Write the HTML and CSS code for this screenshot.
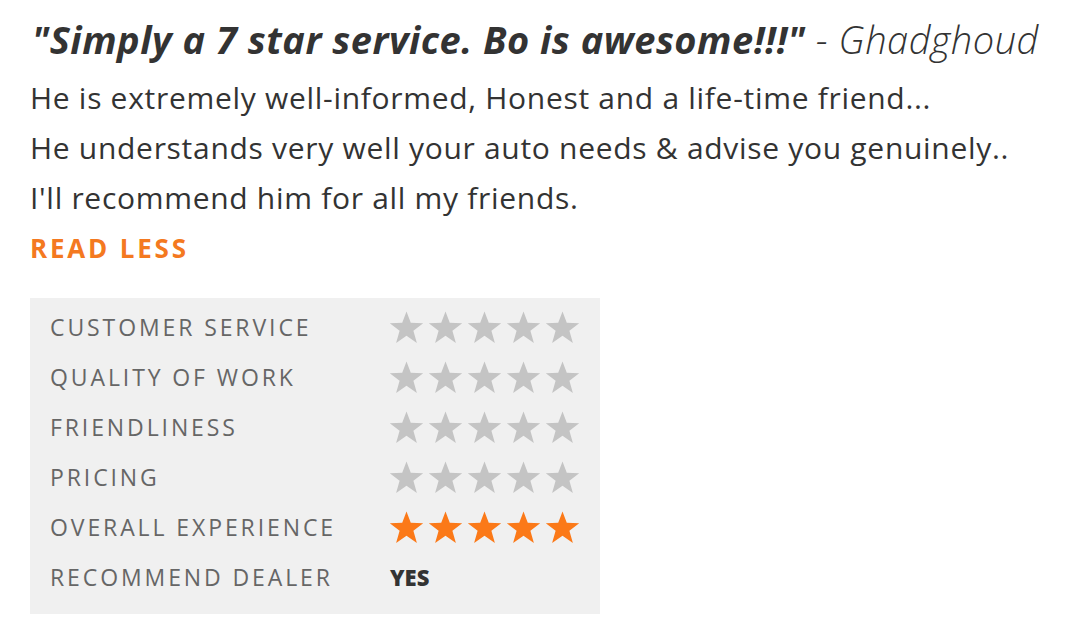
FILE: index.html
```html
<!DOCTYPE html>
<html lang="en">
<head>
    <meta charset="UTF-8">
    <title>Review</title>
    <link rel="stylesheet" href="styles.css">
</head>
<body>
    <div class="review">
        <h2 class="review-title"><strong>"Simply a 7 star service. Bo is awesome!!!"</strong> <span class="author">- Ghadghoud</span></h2>
        <p class="review-text">He is extremely well-informed, Honest and a life-time friend...<br>
        He understands very well your auto needs &amp; advise you genuinely..<br>
        I'll recommend him for all my friends.</p>
        <a href="#" class="read-less">READ LESS</a>

        <div class="ratings">
            <div class="rating-row">
                <span class="label">Customer Service</span>
                <span class="stars"><svg class="star"><use href="#star"/></svg><svg class="star"><use href="#star"/></svg><svg class="star"><use href="#star"/></svg><svg class="star"><use href="#star"/></svg><svg class="star"><use href="#star"/></svg></span>
            </div>
            <div class="rating-row">
                <span class="label">Quality of Work</span>
                <span class="stars"><svg class="star"><use href="#star"/></svg><svg class="star"><use href="#star"/></svg><svg class="star"><use href="#star"/></svg><svg class="star"><use href="#star"/></svg><svg class="star"><use href="#star"/></svg></span>
            </div>
            <div class="rating-row">
                <span class="label">Friendliness</span>
                <span class="stars"><svg class="star"><use href="#star"/></svg><svg class="star"><use href="#star"/></svg><svg class="star"><use href="#star"/></svg><svg class="star"><use href="#star"/></svg><svg class="star"><use href="#star"/></svg></span>
            </div>
            <div class="rating-row">
                <span class="label">Pricing</span>
                <span class="stars"><svg class="star"><use href="#star"/></svg><svg class="star"><use href="#star"/></svg><svg class="star"><use href="#star"/></svg><svg class="star"><use href="#star"/></svg><svg class="star"><use href="#star"/></svg></span>
            </div>
            <div class="rating-row">
                <span class="label">Overall Experience</span>
                <span class="stars filled"><svg class="star"><use href="#star"/></svg><svg class="star"><use href="#star"/></svg><svg class="star"><use href="#star"/></svg><svg class="star"><use href="#star"/></svg><svg class="star"><use href="#star"/></svg></span>
            </div>
            <div class="rating-row">
                <span class="label">Recommend Dealer</span>
                <span class="answer">YES</span>
            </div>
        </div>
    </div>

    <svg width="0" height="0" style="position:absolute">
        <symbol id="star" viewBox="0 0 36 34">
            <polygon points="18,0.5 22.4,12.2 35.2,12.6 25.1,20.4 28.7,33 18,25.6 7.3,33 10.9,20.4 0.8,12.6 13.6,12.2"/>
        </symbol>
    </svg>
</body>
</html>
```

FILE: styles.css
```css
body {
    margin: 0;
    padding: 0;
    background-color: #fff;
    font-family: "Open Sans", "Noto Sans", sans-serif;
    color: #333;
}
.review {
    padding: 14px 0 0 30px;
}
.review-title {
    margin: 0 0 0 2px;
    font-size: 38px;
    font-style: italic;
    font-weight: normal;
    line-height: 50px;
    letter-spacing: 0.5px;
    color: #333;
    white-space: nowrap;
}
.review-title strong {
    font-weight: 700;
}
.review-title .author {
    font-weight: 300;
}
.review-text {
    margin: 9px 0 0;
    font-size: 30px;
    line-height: 50px;
    letter-spacing: 0.7px;
    color: #333;
}
.read-less {
    display: block;
    margin-top: 7px;
    font-size: 26px;
    line-height: 36px;
    font-weight: 700;
    letter-spacing: 2.8px;
    color: #f47920;
    text-decoration: none;
}
.ratings {
    margin-top: 32px;
    width: 530px;
    padding: 4px 20px 12px;
    background-color: #f0f0f0;
}
.rating-row {
    display: flex;
    align-items: center;
    height: 50px;
}
.label {
    width: 340px;
    font-size: 23px;
    font-weight: 500;
    letter-spacing: 2.9px;
    text-transform: uppercase;
    color: #666;
}
.stars {
    display: flex;
    gap: 4px;
}
.star {
    width: 35px;
    height: 33px;
    fill: #c4c4c4;
}
.stars.filled .star {
    fill: #fb7918;
}
.answer {
    font-size: 22px;
    font-weight: 800;
    color: #333;
}
```
